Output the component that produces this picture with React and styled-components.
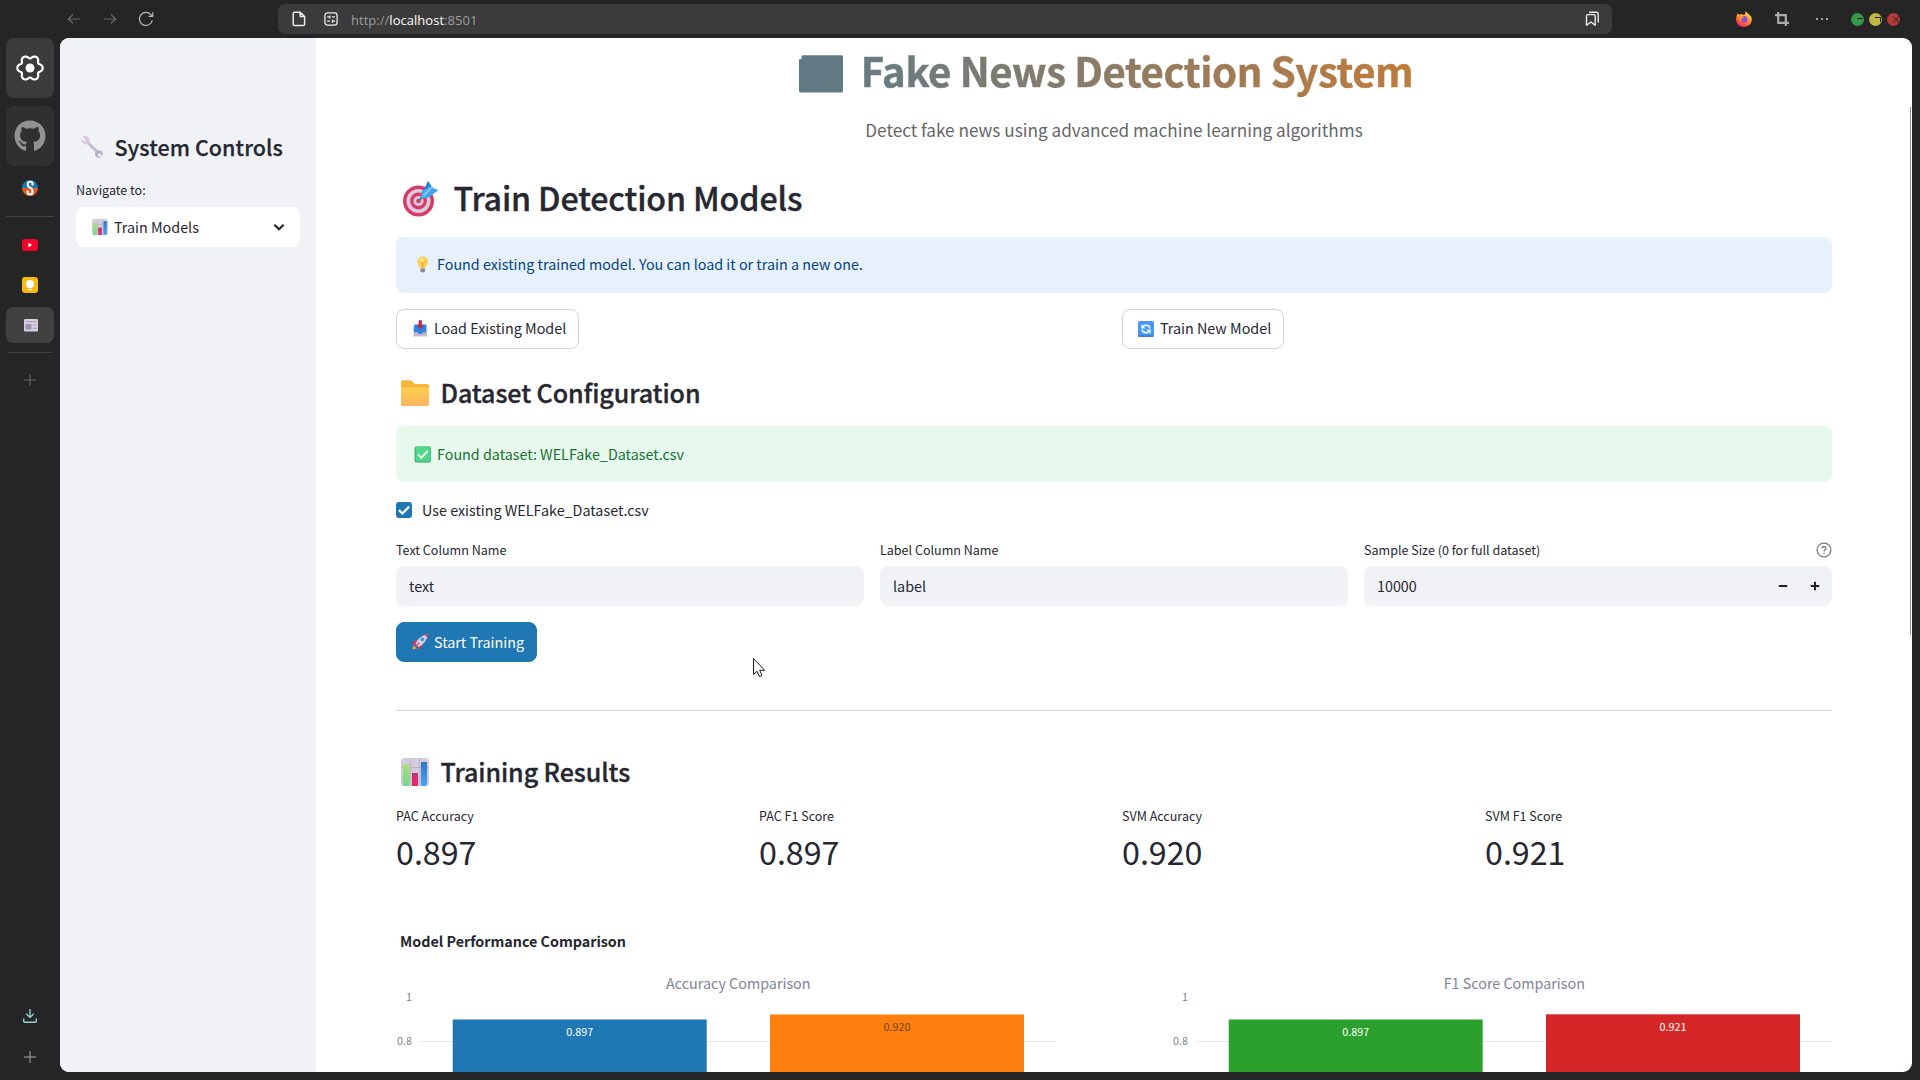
import React from "react";
import styled, { createGlobalStyle, css } from "styled-components";
import { FaGithub } from "react-icons/fa";

const sans = `"Noto Sans CJK SC", "Noto Sans CJK JP", "Open Sans", sans-serif`;

const GlobalStyle = createGlobalStyle`
  *, *::before, *::after { box-sizing: border-box; }
  body { margin: 0; overflow: hidden; background: #252525; font-family: ${sans}; }
  h1, h2, h3, p { margin: 0; font-weight: inherit; }
  button, input { font: inherit; color: inherit; border: 0; background: none; padding: 0; margin: 0; }
  svg { display: block; flex: none; }
`;

/* ---------- browser frame ---------- */

const Window = styled.div`
  width: 1920px;
  height: 1080px;
  display: grid;
  grid-template: 38px 1034px / 60px 1852px;
  background: #252525;
  position: relative;
  overflow: hidden;
`;

const TopBar = styled.header`
  grid-column: 1 / 3;
  width: 1920px;
  height: 38px;
  display: flex;
  align-items: center;
`;

const NavButtons = styled.div`
  width: 278px;
  padding-left: 66px;
  display: flex;
  gap: 20px;
  color: #686868;
`;

const AddressBar = styled.div`
  width: 1334px;
  height: 30px;
  border-radius: 7px;
  background: #3b3b3b;
  display: flex;
  align-items: center;
  padding: 0 12px 0 14px;
  color: #ececec;
`;

const Url = styled.span`
  flex: 1;
  margin-left: 13px;
  font: 13px/20px "Open Sans", "Noto Sans", sans-serif;
  letter-spacing: 0.03px;
  color: #9b9b9b;
  padding-top: 2px;
  b { font-weight: 400; color: #fff; }
`;

const WindowTools = styled.div`
  flex: 1;
  display: flex;
  align-items: center;
  padding-left: 124px;
`;

const Gap = styled.i`
  flex: 0 0 ${(p) => p.$w}px;
`;

const Lights = styled.div`
  display: flex;
  gap: 5px;
  margin-left: 22px;
`;

const Rail = styled.nav`
  display: flex;
  flex-direction: column;
  align-items: center;
  height: 1034px;
  > * { flex-shrink: 0; }
`;

const Pinned = styled.div`
  width: 48px;
  height: 60px;
  border-radius: 8px;
  display: grid;
  place-items: center;
  background: ${(p) => (p.$active ? "#3b3b3b" : "#303030")};
  margin-bottom: 8px;
  color: #929292;
`;

const Tab = styled.div`
  width: 48px;
  height: ${(p) => p.$h || 40}px;
  border-radius: 7px;
  display: grid;
  place-items: center;
  margin-top: ${(p) => (p.$active ? 2 : 0)}px;
  background: ${(p) => (p.$active ? "#414141" : "transparent")};
`;

const RailLine = styled.div`
  width: ${(p) => p.$w || 48}px;
  height: 1px;
  background: #444;
  margin: ${(p) => p.$m};
`;

const Spacer = styled.div`
  flex: 1;
`;

const Page = styled.div`
  display: flex;
  height: 1034px;
  border-radius: 9px;
  overflow: hidden;
  background: #fff;
  position: relative;
`;

/* ---------- app sidebar ---------- */

const Sidebar = styled.aside`
  width: 256px;
  background: #f0f2f6;
  padding: 93px 16px 0;
  color: #262730;
`;

const SidebarTitle = styled.h2`
  display: flex;
  align-items: center;
  gap: 10.5px;
  padding-left: 4px;
  height: 32px;
  margin-bottom: 17px;
  font-size: 21.49px;
  line-height: 32px;
  font-weight: 500;
  -webkit-text-stroke: 0.25px currentColor;
  letter-spacing: 0.06px;
  white-space: nowrap;
`;

const Label = styled.div`
  display: flex;
  align-items: center;
  justify-content: space-between;
  font-size: 12.54px;
  line-height: 20px;
  height: 20px;
  color: #262730;
`;

const Select = styled.div`
  height: 40px;
  margin-top: 7px;
  border-radius: 8px;
  background: #fff;
  display: flex;
  align-items: center;
  padding: 0 14px 1px 16px;
  gap: 6px;
  font-size: 14.33px;
  span { flex: 1; }
`;

/* ---------- main column ---------- */

const Main = styled.main`
  flex: 1;
  padding: 0 80px;
  color: #262730;
  font-size: 14.33px;
  display: flex;
  flex-direction: column;
  > * { flex-shrink: 0; }
`;

const Title = styled.h1`
  display: flex;
  justify-content: center;
  align-items: center;
  gap: 18px;
  height: 63px;
  padding: 0 16px 0 0;
  font-size: 40.1px;
  line-height: 63px;
  font-weight: 700;
  letter-spacing: -0.4px;
  white-space: nowrap;
  svg { margin-top: 8px; }
`;

const GradientText = styled.span`
  background: linear-gradient(90deg, #677b80, #8c7b66 45%, #bf7b3b);
  background-clip: text;
  -webkit-background-clip: text;
  -webkit-text-stroke: 0.5px transparent;
  color: transparent;
`;

const Subtitle = styled.p`
  margin-top: 14px;
  height: 30px;
  font-size: 17.19px;
  line-height: 30px;
  text-align: center;
  color: #666;
`;

const heading = css`
  display: flex;
  align-items: center;
  font-weight: 500;
  -webkit-text-stroke: 0.35px currentColor;
  white-space: nowrap;
  color: #262730;
  svg { margin-top: 2px; }
`;

const PageHeading = styled.h2`
  ${heading}
  height: 44px;
  margin-top: 30px;
  padding-left: 6px;
  gap: 14.5px;
  font-size: 32.2px;
  line-height: 44px;
  letter-spacing: -0.13px;
`;

const SectionHeading = styled.h3`
  ${heading}
  height: 36px;
  margin-top: ${(p) => p.$top}px;
  padding-left: 5px;
  gap: 11.5px;
  font-size: 25.07px;
  line-height: 36px;
  letter-spacing: -0.08px;
`;

const Alert = styled.div`
  height: 56px;
  margin-top: ${(p) => p.$top}px;
  border-radius: 8px;
  padding: 0 18px ${(p) => (p.$kind === "info" ? 3 : 1)}px;
  display: flex;
  align-items: center;
  gap: 6px;
  background: ${(p) => (p.$kind === "info" ? "#e6f1fb" : "#e7f9ed")};
  color: ${(p) => (p.$kind === "info" ? "#074280" : "#177233")};
  svg { margin-top: ${(p) => (p.$kind === "info" ? 2 : 1)}px; }
`;

const Columns = styled.div`
  display: grid;
  grid-template-columns: repeat(${(p) => p.$n}, 1fr);
  gap: 16px;
  margin-top: ${(p) => p.$top}px;
`;

const Button = styled.button`
  height: 40px;
  width: ${(p) => p.$w}px;
  border-radius: 8px;
  border: 1px solid ${(p) => (p.$primary ? "#1f77b4" : "#d3d3d6")};
  background: ${(p) => (p.$primary ? "#1f77b4" : "#fff")};
  color: ${(p) => (p.$primary ? "#fff" : "#262730")};
  margin-top: ${(p) => p.$top || 0}px;
  display: flex;
  align-items: center;
  gap: ${(p) => (p.$primary ? 5 : 6)}px;
  padding: 0 0 ${(p) => (p.$primary ? 1 : 3)}px 15px;
  white-space: nowrap;
  svg { margin-top: ${(p) => (p.$primary ? 0 : 2)}px; }
`;

const CheckRow = styled.label`
  display: flex;
  align-items: center;
  gap: 10px;
  height: 24px;
  margin-top: 16px;
  padding-bottom: 1px;
  svg { margin-top: 1px; }
`;

const Field = styled.div`
  display: flex;
  flex-direction: column;
`;

const InputBox = styled.div`
  height: 40px;
  margin-top: 6px;
  border-radius: 8px;
  background: #f0f2f6;
  display: flex;
  align-items: center;
  padding: 0 12px 0 13px;
  input { flex: 1; min-width: 0; outline: 0; height: 40px; padding-bottom: 2px; }
`;

const Steps = styled.div`
  display: flex;
  gap: 22px;
`;

const Divider = styled.hr`
  width: 100%;
  height: 1px;
  border: 0;
  margin: 48px 0 0;
  background: #d5d6d8;
`;

const MetricValue = styled.div`
  font-size: 32.23px;
  line-height: 50px;
  height: 54px;
  color: #262730;
`;

const ChartBox = styled.div`
  margin-top: 40px;
  height: 152px;
  overflow: hidden;
  margin-right: -10px;
`;

const ScrollThumb = styled.div`
  position: absolute;
  right: 1px;
  top: 69px;
  width: 1px;
  height: 528px;
  background: #8f8f92;
`;

const Pointer = styled.div`
  position: absolute;
  left: 752px;
  top: 657px;
`;

/* ---------- drawings ---------- */

const gearPath = (() => {
  const pts = [];
  for (let i = 0; i < 120; i++) {
    const a = (i / 120) * Math.PI * 2;
    const c = Math.cos(6 * a);
    const r = 11.3 + 1.6 * c - 0.2 * Math.cos(12 * a);
    pts.push(`${(16 + r * Math.cos(a)).toFixed(2)} ${(16 + r * Math.sin(a)).toFixed(2)}`);
  }
  return `M${pts.join("L")}Z`;
})();

const Gear = () => (
  <svg width="32" height="32" viewBox="0 0 32 32">
    <path d={gearPath} fill="none" stroke="#fff" strokeWidth="2.2" />
    <circle cx="16" cy="16" r="4.5" fill="#fff" />
  </svg>
);

const Arrow = ({ flip }) => (
  <svg width="16" height="16" viewBox="0 0 16 16" fill="none" stroke="currentColor" strokeWidth="1.2" transform={flip ? "scale(-1 1)" : undefined}>
    <path d="M14 8H2.5M7 3.5L2.2 8L7 12.5" />
  </svg>
);

const Reload = () => (
  <svg width="16" height="16" viewBox="0 0 16 16" fill="none" stroke="#b5b5b5" strokeWidth="1.3">
    <path d="M14.3 9.3A6.5 6.5 0 1 1 12.8 3.6L14.5 5.2M14.7 1.2V5.4H10.5" />
  </svg>
);

const DocIcon = () => (
  <svg width="14" height="16" viewBox="0 0 14 16" fill="none" stroke="currentColor" strokeWidth="1.5" strokeLinejoin="round">
    <path d="M8 1.2H2.6Q1.2 1.2 1.2 2.6V13.2Q1.2 14.6 2.6 14.6H11.2Q12.6 14.6 12.6 13.2V5.6L8.2 1.2V5.6H12.4" />
  </svg>
);

const SiteIcon = () => (
  <svg width="14" height="14" viewBox="0 0 14 14" fill="none" stroke="currentColor" strokeWidth="1.3">
    <rect x=".9" y=".9" width="12.2" height="12.2" rx="2.6" />
    <path d="M3.2 4.9H6.4M8 4.9H11M3.2 9.2H6M7.8 9.2H11M5.8 3.4V6.4M8.6 7.7V10.7" />
  </svg>
);

const Bookmarks = () => (
  <svg width="15" height="16" viewBox="0 0 15 16" fill="none" stroke="currentColor" strokeWidth="1.4" strokeLinejoin="round">
    <path d="M1.5 5Q1.5 3.6 2.9 3.6H8.8Q10.2 3.6 10.2 5V14.2L5.9 11L1.5 14.2Z" />
    <path d="M4.2 1.3H11.2Q13.2 1.3 13.2 3.3V11.6" />
  </svg>
);

const Fox = () => (
  <svg width="16" height="16" viewBox="0 0 16 16">
    <defs>
      <linearGradient id="fx" x1=".8" y1="0" x2=".3" y2="1">
        <stop offset="0" stopColor="#ffe84a" />
        <stop offset=".45" stopColor="#ff9a2b" />
        <stop offset="1" stopColor="#f5245f" />
      </linearGradient>
    </defs>
    <path d="M1.6 2.3L3 3.8Q4.4 2.8 6 2.9L7 4L9.4 3.3Q9 1.4 10 .2Q11 2 13.2 3.4Q16 5.6 15.9 8.6Q15.3 15.4 8 15.9Q.6 15.5.1 8.4Q.2 4.6 1.6 2.3Z" fill="url(#fx)" />
    <circle cx="8.2" cy="8.3" r="3.2" fill="#8a4be0" />
    <path d="M3.5 5Q6 4 8.5 6.5Q7 7.5 5.6 7.3Q5 9 6.6 10.6Q3 9.5 3.5 5Z" fill="#ff9420" />
  </svg>
);

const Crop = () => (
  <svg width="14" height="14" viewBox="0 0 14 14" fill="none" stroke="#ababab" strokeWidth="2.2">
    <path d="M0 3.2H10.8V14M3.2 0V10.8H14" />
  </svg>
);

const Dots = () => (
  <svg width="14" height="4" viewBox="0 0 14 4" fill="#a5a5a5">
    <rect x="1" y="1" width="2" height="2" />
    <rect x="6" y="1" width="2" height="2" />
    <rect x="11" y="1" width="2" height="2" />
  </svg>
);

const Light = ({ fill, d }) => (
  <svg width="13" height="13" viewBox="0 0 13 13">
    <circle cx="6.5" cy="6.5" r="6.5" fill={fill} />
    <path d={d} stroke="#1d1d1d" fill="none" strokeWidth="1" />
  </svg>
);

const SiteS = () => (
  <svg width="16" height="16" viewBox="0 0 16 16">
    <path d="M0 8A8 8 0 0 1 16 8Z" fill="#1c75b0" />
    <path d="M0 8A8 8 0 0 0 16 8Z" fill="#dd5a2b" />
    <path d="M10.5 5.6V3.4Q10.5 1.7 8.2 1.7Q5.8 1.7 5.8 3.5V5.5Q5.8 6.7 8.1 7.7Q10.4 8.7 10.4 10V12.4Q10.4 14.3 8 14.3Q5.6 14.3 5.6 12.4V10.4" fill="none" stroke="#fff" strokeWidth="2" />
  </svg>
);

const Keep = () => (
  <svg width="16" height="16" viewBox="0 0 16 16">
    <rect width="16" height="16" rx="3" fill="#f7b90f" />
    <circle cx="8" cy="7" r="4.1" fill="#fff" />
    <rect x="5.9" y="11.9" width="4.2" height="1.3" fill="#fff" />
    <rect x="5.9" y="8" width="4.2" height="2.9" fill="#fff" />
  </svg>
);

const YtIcon = () => (
  <svg width="16" height="12" viewBox="0 0 16 12">
    <rect width="16" height="12" rx="3" fill="#f6002d" />
    <path d="M6.4 3.8L10.2 6L6.4 8.2Z" fill="#fff" />
  </svg>
);

const News = () => (
  <svg width="18" height="14" viewBox="0 0 18 14">
    <rect x="3" y="1" width="14" height="12.5" rx="1.2" fill="#d9cfe2" />
    <path d="M4.5 3.7H15.3" stroke="#aaa0b6" strokeWidth="1.2" />
    <rect x="4.5" y="6" width="6" height="5.6" fill="#9f95ab" />
    <path d="M12 7H15.5M12 10.3H15.5" stroke="#aaa0b6" strokeWidth="1.2" />
  </svg>
);

const Plus = ({ color }) => (
  <svg width="12" height="12" viewBox="0 0 12 12" stroke={color}>
    <path d="M6 0V12M0 6H12" />
  </svg>
);

const Download = () => (
  <svg width="14" height="14" viewBox="0 0 14 14" fill="none" stroke="#93d8d0" strokeWidth="1.4">
    <path d="M7 0V8.2M3.2 4.8L7 8.4L10.8 4.8M.7 9.4V12.2Q.7 13.3 1.8 13.3H12.2Q13.3 13.3 13.3 12.2V9.4" />
  </svg>
);

const Wrench = () => (
  <svg width="24" height="24" viewBox="0 0 24 24">
    <path d="M7 7L17.5 17" stroke="#c5bad3" strokeWidth="3" />
    <path d="M2.3 1.6L5.6 4.6L4.4 6.4L1.2 4Q1 7.6 4 8.9Q7.6 9.9 9.3 7Q10.2 3.6 7.4 1.4Q4.8.2 2.3 1.6Z" fill="#d6cbe0" />
    <path d="M22.3 20.9L19 18L17.6 19.9L20.8 22.7Q17 23.6 15.2 20.8Q14.2 17.7 16.5 15.7Q19.6 14.4 22 16.6Q23.4 18.6 22.3 20.9Z" fill="#bdb2cd" />
  </svg>
);

const BarEmoji = ({ size }) => (
  <svg width={size} height={size} viewBox="0 0 28 28">
    <defs>
      <linearGradient id="bg1" x1="0" y1="0" x2="0" y2="1"><stop offset="0" stopColor="#a9e070" /><stop offset="1" stopColor="#6ddc8f" /></linearGradient>
      <linearGradient id="bg2" x1="0" y1="0" x2="0" y2="1"><stop offset="0" stopColor="#c72f78" /><stop offset="1" stopColor="#ee2462" /></linearGradient>
      <linearGradient id="bg3" x1="0" y1="0" x2="0" y2="1"><stop offset="0" stopColor="#2f77c4" /><stop offset="1" stopColor="#43a6f5" /></linearGradient>
    </defs>
    <rect width="28" height="28" rx="3.6" fill="#d5cbdc" />
    <path d="M9.7 0V28M18.8 0V28M0 9.5H28M0 19H28" stroke="#b9afc1" strokeWidth=".9" />
    <path d="M2 6.5H8.5V28H3.6Q2 28 2 26Z" fill="url(#bg1)" />
    <rect x="11" y="15" width="6" height="13" fill="url(#bg2)" />
    <path d="M20 4H26V26Q26 28 24.4 28H20Z" fill="url(#bg3)" />
  </svg>
);

const Target = () => (
  <svg width="37" height="37" viewBox="0 0 37 37">
    <circle cx="16.5" cy="21" r="15.5" fill="#d73a63" />
    <circle cx="16.5" cy="21" r="12" fill="#d9cbe2" />
    <circle cx="16.5" cy="21" r="8.4" fill="#d73a63" />
    <circle cx="16.5" cy="21" r="5.1" fill="#d9cbe2" />
    <circle cx="16.5" cy="21" r="2.3" fill="#d73a63" />
    <path d="M16.8 20.8L24 13" stroke="#6d6a94" strokeWidth="2" />
    <path d="M18.5 17L20 11L24 8.2L26 1L29.2 5.6L31 8L36.5 10.2L31 14L27.4 17.2L20.7 18.6Z" fill="#40a2ef" />
    <path d="M21 16.2L30.5 6.6" stroke="#74c6fb" strokeWidth="2.6" />
    <path d="M22 9.6L25.8 1.2L29 6" fill="#2c7fd0" />
  </svg>
);

const Bulb = () => (
  <svg width="17" height="17" viewBox="0 0 17 17">
    <path d="M8.6.3Q14 .9 14 6Q13.8 8.2 12 10L11 12.6H6.4L5.3 10Q3.4 8.1 3.3 5.9Q3.6.7 8.6.3Z" fill="#fccb50" />
    <path d="M7 6.5L8.7 8L10.4 6.5M8.7 8V12" stroke="#f09a2e" strokeWidth="1" fill="none" />
    <ellipse cx="7.6" cy="3.7" rx="2.6" ry="2" fill="#ffe48a" />
    <path d="M6.4 12.4H11V15Q10.5 16.6 8.7 16.6Q6.9 16.6 6.4 15Z" fill="#93859f" />
  </svg>
);

const Inbox = () => (
  <svg width="16" height="17" viewBox="0 0 16 17">
    <rect x="2" y="4.5" width="12.4" height="10" rx="1.2" fill="#2f83d8" />
    <path d="M1.5 12.2H5.5Q6.5 14.3 8.2 14.3Q10 14.3 11 12.2H15V16Q15 16.5 14.4 16.5H2.1Q1.5 16.5 1.5 16Z" fill="#c3b9d4" />
    <path d="M1.5 11L2 6M15 11L14.5 6" stroke="#a7c6e8" />
    <path d="M6.6 .3H9.8V5.2H12L8.2 9L4.4 5.2H6.6Z" fill="#c5244f" />
  </svg>
);

const Refresh = () => (
  <svg width="16" height="16" viewBox="0 0 16 16">
    <rect width="16" height="16" rx="1.8" fill="#4a98f5" />
    <rect y="14" width="16" height="2" rx="1" fill="#3f7fd8" />
    <path d="M4.5 6Q7.5 2.5 11.3 5.5L12 7.5M11.5 10Q8.5 13.3 4.7 10.4L4 8.5" fill="none" stroke="#e9f3ff" strokeWidth="1.7" />
    <path d="M3.3 3V7.4H7.5ZM12.7 13V8.5H8.5Z" fill="#e9f3ff" />
  </svg>
);

const Folder = () => (
  <svg width="28" height="28" viewBox="0 0 28 28">
    <defs>
      <linearGradient id="fo" x1="0" y1="0" x2="0" y2="1"><stop offset="0" stopColor="#ffd24f" /><stop offset="1" stopColor="#fbb25d" /></linearGradient>
    </defs>
    <path d="M0 3Q0 1.2 1.8 1.2H8.6Q10 1.2 11 2.2L13.8 5H26.2Q28 5 28 6.8V20H0Z" fill="#f9b53a" />
    <path d="M0 8.4H26.8Q28 8.4 28 9.6V25.4Q28 27 26.4 27H1.6Q0 27 0 25.4Z" fill="url(#fo)" />
  </svg>
);

const CheckEmoji = () => (
  <svg width="17" height="17" viewBox="0 0 17 17">
    <rect x=".6" y=".4" width="16.3" height="16.2" rx="2" fill="#35a36b" />
    <rect x="1.6" y=".6" width="15" height="14.9" rx="1.5" fill="#52d68b" />
    <path d="M4 8.4L7.4 11.6L13.7 4.9" stroke="#effff5" strokeWidth="1.9" fill="none" />
  </svg>
);

const Rocket = () => (
  <svg width="17" height="17" viewBox="0 0 17 17">
    <path d="M.6 16.4L1.2 12L5 15.6Z" fill="#f79a35" />
    <path d="M5 6.5L.8 9.2V12.5L4.5 11ZM10.6 12L8 16.2L5.6 15.4L6.8 12Z" fill="#e0355f" />
    <path d="M3.6 11.2Q5.5 3.8 16.4.5Q14.5 10 6.5 14Z" fill="#d9d0e6" />
    <path d="M12.6 1.9L16.5.4L15.3 4.6Z" fill="#e0355f" />
    <circle cx="10.3" cy="6.3" r="1.9" fill="#4c8fd6" />
    <path d="M3 13.8L7.4 9.6" stroke="#d83b6a" strokeWidth="1.3" />
  </svg>
);

const Block = () => (
  <svg width="44" height="38" viewBox="0 0 44 38">
    <path d="M4 .2H42.500Q44 .2 44 1.600V36Q44 37.400 42.500 37.400H1.400Q0 37.400 0 36V5Q0 4 1 4H2.600V1.400Q2.600 .2 4 .2Z" fill="#617a84" />
  </svg>
);

const Chevron = () => (
  <svg width="14" height="10" viewBox="0 0 14 10" fill="none" stroke="#262730" strokeWidth="2.2">
    <path d="M2.4 2.7L7 7.3L11.6 2.7" />
  </svg>
);

const CheckMark = () => (
  <svg width="16" height="16" viewBox="0 0 16 16">
    <rect width="16" height="16" rx="3" fill="#1f77b4" />
    <path d="M2.9 8.2L6.4 11.5L13.2 4.6" fill="none" stroke="#fff" strokeWidth="2.3" />
  </svg>
);

const Help = () => (
  <svg width="16" height="16" viewBox="0 0 16 16" fill="none" stroke="#7c7d84" strokeWidth="1.3">
    <circle cx="8" cy="8" r="6.9" />
    <path d="M6 6.3Q6.1 4.5 8 4.5Q10 4.6 10 6.2Q10 7.2 8.9 7.9Q8 8.5 8 9.5M8 10.8V12.1" />
  </svg>
);

const Step = ({ plus }) => (
  <svg width="10" height="10" viewBox="0 0 10 10" fill="#1f2028">
    <rect x=".8" y="4" width="8.4" height="2" />
    {plus && <rect x="4" y=".8" width="2" height="8.4" />}
  </svg>
);

const Cursor = () => (
  <svg width="15" height="22" viewBox="0 0 15 22">
    <path d="M1.5 1.5V17.4L5 14.3L7.5 19.6L10 18.5L7.7 13.3H12.6Z" fill="#fff" stroke="#1c1c22" />
  </svg>
);

/* ---------- chart ---------- */

const ChartTitle = styled.text`
  font: 700 14.33px ${sans};
  fill: #262730;
`;
const PlotTitle = styled.text`
  font: 400 14.33px ${sans};
  fill: #808495;
  text-anchor: middle;
`;
const Tick = styled.text`
  font: 400 10.75px ${sans};
  fill: #808495;
  text-anchor: end;
`;
const BarValue = styled.text`
  font: 400 10.75px ${sans};
  text-anchor: middle;
`;

const plots = [
  {
    x: 25,
    title: "Accuracy Comparison",
    bars: [
      { v: "0.897", top: 99.5, color: "#1f77b4", ink: "#fff" },
      { v: "0.920", top: 94.5, color: "#ff7f0e", ink: "#6b4420" },
    ],
  },
  {
    x: 801,
    title: "F1 Score Comparison",
    bars: [
      { v: "0.897", top: 99.5, color: "#2ca02c", ink: "#fff" },
      { v: "0.921", top: 94.3, color: "#d62728", ink: "#fff" },
    ],
  },
];

const Chart = () => (
  <svg width="1446" height="152" viewBox="0 0 1446 152">
    <ChartTitle x="4" y="27" textLength="226">Model Performance Comparison</ChartTitle>
    {plots.map((p) => (
      <g key={p.title} transform={`translate(${p.x} 0)`}>
        <PlotTitle x="317.3" y="69">{p.title}</PlotTitle>
        <Tick x="-9" y="80.5">1</Tick>
        <Tick x="-9" y="125">0.8</Tick>
        <rect x="0" y="121" width="635" height="1" fill="#e6e7ea" />
        {p.bars.map((b, i) => (
          <g key={b.v + i} transform={`translate(${31.7 + i * 317.3} 0)`}>
            <rect y={b.top} width="254" height="60" fill={b.color} />
            <BarValue x="127" y={b.top + 16.5} fill={b.ink}>{b.v}</BarValue>
          </g>
        ))}
      </g>
    ))}
  </svg>
);

const metrics = [
  ["PAC Accuracy", "0.897"],
  ["PAC F1 Score", "0.897"],
  ["SVM Accuracy", "0.920"],
  ["SVM F1 Score", "0.921"],
];

export default function App() {
  return (
    <>
      <GlobalStyle />
      <Window>
        <TopBar>
          <NavButtons>
            <Arrow />
            <Arrow flip />
            <Reload />
          </NavButtons>
          <AddressBar>
            <DocIcon />
            <Gap $w={18} />
            <SiteIcon />
            <Url>http://<b>localhost</b>:8501</Url>
            <Bookmarks />
          </AddressBar>
          <WindowTools>
            <Fox />
            <Gap $w={23} />
            <Crop />
            <Gap $w={26} />
            <Dots />
            <Lights>
              <Light fill="#36984a" d="M6 5.5H12" />
              <Light fill="#c0b73e" d="M6 4.5H11.5V9" />
              <Light fill="#b33a38" d="M6 3.5L12 9.5M12 3.5L6 9.5" />
            </Lights>
          </WindowTools>
        </TopBar>

        <Rail>
          <Pinned $active><Gear /></Pinned>
          <Pinned><FaGithub size={32} /></Pinned>
          <Tab $h={28}><SiteS /></Tab>
          <RailLine $m="14px 0 8px" />
          <Tab><YtIcon /></Tab>
          <Tab><Keep /></Tab>
          <Tab $active $h={36}><News /></Tab>
          <RailLine $w={44} $m="9px 0 7px" />
          <Tab><Plus color="#6a6a6a" /></Tab>
          <Spacer />
          <Tab $h={51}><Download /></Tab>
          <Tab $h={31}><Plus color="#aaa" /></Tab>
        </Rail>

        <Page>
          <Sidebar>
            <SidebarTitle><Wrench />System Controls</SidebarTitle>
            <Label>Navigate to:</Label>
            <Select><BarEmoji size={16} /><span>Train Models</span><Chevron /></Select>
          </Sidebar>

          <Main>
            <Title><Block /><GradientText>Fake News Detection System</GradientText></Title>
            <Subtitle>Detect fake news using advanced machine learning algorithms</Subtitle>

            <PageHeading><Target />Train Detection Models</PageHeading>
            <Alert $kind="info" $top={18}><Bulb />Found existing trained model. You can load it or train a new one.</Alert>
            <Columns $n={2} $top={16}>
              <Button $w={183}><Inbox />Load Existing Model</Button>
              <Button $w={162}><Refresh />Train New Model</Button>
            </Columns>

            <SectionHeading $top={25}><Folder />Dataset Configuration</SectionHeading>
            <Alert $kind="success" $top={16}><CheckEmoji />Found dataset: WELFake_Dataset.csv</Alert>
            <CheckRow><CheckMark />Use existing WELFake_Dataset.csv</CheckRow>
            <Columns $n={3} $top={18}>
              <Field>
                <Label>Text Column Name</Label>
                <InputBox><input defaultValue="text" /></InputBox>
              </Field>
              <Field>
                <Label>Label Column Name</Label>
                <InputBox><input defaultValue="label" /></InputBox>
              </Field>
              <Field>
                <Label>Sample Size (0 for full dataset)<Help /></Label>
                <InputBox>
                  <input defaultValue="10000" />
                  <Steps><Step /><Step plus /></Steps>
                </InputBox>
              </Field>
            </Columns>
            <Button $primary $w={141} $top={16}><Rocket />Start Training</Button>
            <Divider />

            <SectionHeading $top={42}><BarEmoji size={28} />Training Results</SectionHeading>
            <Columns $n={4} $top={17}>
              {metrics.map(([k, v]) => (
                <div key={k}>
                  <Label>{k}</Label>
                  <MetricValue>{v}</MetricValue>
                </div>
              ))}
            </Columns>
            <ChartBox><Chart /></ChartBox>
          </Main>
          <ScrollThumb />
        </Page>
        <Pointer><Cursor /></Pointer>
      </Window>
    </>
  );
}
